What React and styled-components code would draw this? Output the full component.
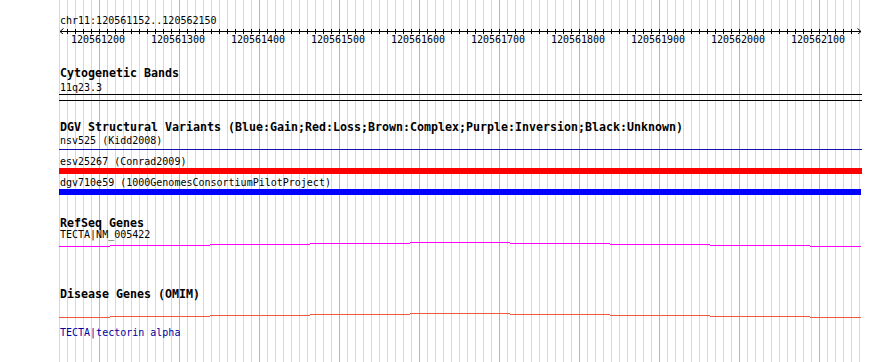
import React from "react";
import styled, { createGlobalStyle } from "styled-components";

const GlobalStyle = createGlobalStyle`
  html, body { margin: 0; padding: 0; background: #ffffff; }
  body { font-family: "DejaVu Sans Mono", "Liberation Mono", monospace; }
`;

const Page = styled.div`
  width: 890px;
  height: 362px;
  background: #ffffff;
  overflow: hidden;
  display: flex;
`;

const Canvas = styled.div`
  margin-left: 59px;
  width: 803px;
  height: 362px;
  display: grid;
  grid-template: 100% / 100%;
  & > * {
    grid-area: 1 / 1;
  }
`;

const GridLines = styled.div`
  display: flex;
  gap: 7px;
  height: 362px;
`;

const GridLine = styled.div`
  flex: none;
  width: 1px;
  height: 100%;
  background: ${(p) => (p.$major ? "#86c6ec" : "#aaecee")};
`;

const Tracks = styled.div`
  display: flex;
  flex-direction: column;
  min-width: 0;
`;

const Label = styled.div`
  font-size: 10px;
  line-height: 11px;
  height: 11px;
  padding-left: 1px;
  white-space: nowrap;
  color: ${(p) => p.$color || "#000000"};
  margin-top: ${(p) => p.$mt || 0}px;
`;

const Title = styled.div`
  font-size: 11.63px;
  font-weight: bold;
  line-height: 12px;
  height: 12px;
  padding-left: 1px;
  white-space: nowrap;
  color: #000000;
  margin-top: ${(p) => p.$mt || 0}px;
`;

const RulerSvg = styled.svg`
  display: block;
  margin-top: 1px;
  flex: none;
`;

const TickRow = styled.div`
  display: grid;
  grid-template-columns: repeat(10, 80px);
  font-size: 10px;
  line-height: 11px;
  height: 11px;
`;

const TickLabel = styled.span`
  text-align: center;
  white-space: nowrap;
  margin-left: -2px;
`;

const Band = styled.div`
  box-sizing: border-box;
  width: 803px;
  height: 7px;
  margin-top: 1px;
  border-top: 1px solid #000000;
  border-bottom: 1px solid #000000;
  flex: none;
`;

const Bar = styled.div`
  width: ${(p) => p.$width || 803}px;
  height: 6px;
  margin-top: 1px;
  flex: none;
  background: ${(p) =>
    p.$line
      ? `linear-gradient(to bottom, transparent 0 2px, ${p.$color} 2px 3px, transparent 3px)`
      : p.$color};
`;

const StepSvg = styled.svg`
  display: block;
  flex: none;
  margin-top: ${(p) => p.$mt || 0}px;
`;

const ticks = Array.from({ length: 99 }, (_, i) => 8 * (i + 1) + 0.5);
const tickLabels = Array.from({ length: 10 }, (_, i) => String(120561200 + i * 100));
const gridIdx = Array.from({ length: 101 }, (_, i) => i);

function Ruler() {
  const d = ticks.map((x) => `M${x} 2V7`).join("");
  return (
    <RulerSvg width="803" height="7" viewBox="0 0 803 7">
      <path d="M1 4.5H802" stroke="#000" strokeWidth="1" shapeRendering="crispEdges" fill="none" />
      <path d={d} stroke="#000" strokeWidth="1" shapeRendering="crispEdges" fill="none" />
      <path d="M4.5 1.5L1 4.5L4.5 7.5" stroke="#000" strokeWidth="1" fill="none" />
      <path d="M798.5 1.5L802 4.5L798.5 7.5" stroke="#000" strokeWidth="1" fill="none" />
    </RulerSvg>
  );
}

const steps = [
  [0, 51, 6],
  [51, 151, 5],
  [151, 251, 4],
  [251, 351, 3],
  [351, 451, 2],
  [451, 551, 3],
  [551, 651, 4],
  [651, 751, 5],
  [751, 802, 6],
];

function StepLine({ color, mt }) {
  const d = steps.map(([a, b, r]) => `M${a} ${r + 0.5}H${b}`).join("");
  return (
    <StepSvg $mt={mt} width="803" height="7" viewBox="0 0 803 7">
      <path d={d} stroke={color} strokeWidth="1" shapeRendering="crispEdges" fill="none" />
    </StepSvg>
  );
}

export default function App() {
  return (
    <>
      <GlobalStyle />
      <Page>
        <Canvas>
          <GridLines>
            {gridIdx.map((i) => (
              <GridLine key={i} $major={i % 10 === 5} />
            ))}
          </GridLines>
          <Tracks>
            <Label $mt={15}>chr11:120561152..120562150</Label>
            <Ruler />
            <TickRow>
              {tickLabels.map((t) => (
                <TickLabel key={t}>{t}</TickLabel>
              ))}
            </TickRow>

            <Title $mt={22}>Cytogenetic Bands</Title>
            <Label $mt={3}>11q23.3</Label>
            <Band />

            <Title $mt={20}>
              DGV Structural Variants (Blue:Gain;Red:Loss;Brown:Complex;Purple:Inversion;Black:Unknown)
            </Title>
            <Label $mt={2}>nsv525 (Kidd2008)</Label>
            <Bar $line $color="#1010b4" />
            <Label $mt={3}>esv25267 (Conrad2009)</Label>
            <Bar $color="#ff0000" />
            <Label $mt={3}>dgv710e59 (1000GenomesConsortiumPilotProject)</Label>
            <Bar $color="#0000ff" $width={802} />

            <Title $mt={22}>RefSeq Genes</Title>
            <Label>TECTA|NM_005422</Label>
            <StepLine color="#ff00ff" mt={0} />

            <Title $mt={41}>Disease Genes (OMIM)</Title>
            <StepLine color="#f25a3c" mt={11} />
            <Label $mt={9} $color="#0000a0">TECTA|tectorin alpha</Label>
          </Tracks>
        </Canvas>
      </Page>
    </>
  );
}
